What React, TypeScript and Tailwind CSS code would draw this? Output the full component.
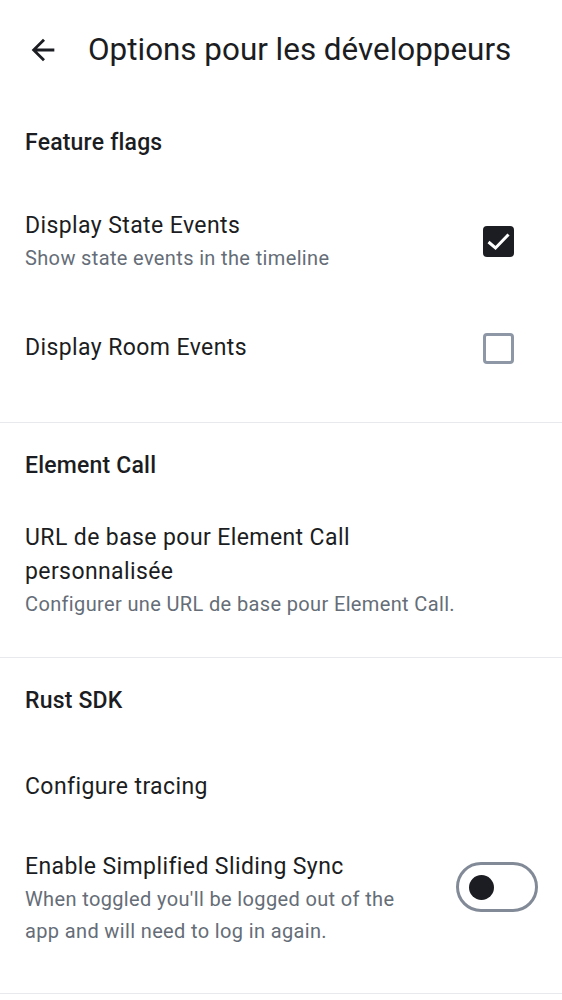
import React from "react";

const font = { fontFamily: "Roboto, 'Noto Sans', sans-serif" };

const SectionHeader: React.FC<{ title: string }> = ({ title }) => (
    <div className="px-[25px] pt-[27px] pb-[23px]">
        <h2 className="text-[23px] leading-[32px] font-medium tracking-[0.2px] text-[#1b1d22]">{title}</h2>
    </div>
);

const Divider: React.FC = () => <div className="h-px bg-[#e7e9ec]" />;

const Checkbox: React.FC<{ checked?: boolean }> = ({ checked }) =>
    checked ? (
        <div className="w-[31px] h-[31px] rounded-[4px] bg-[#1b1d22]">
            <svg width="31" height="31" viewBox="0 0 31 31" fill="none">
                <path d="M5.5 16l7 6L25.5 8.5" stroke="white" strokeWidth="3" />
            </svg>
        </div>
    ) : (
        <div className="w-[31px] h-[31px] rounded-[4px] border-[3px] border-[#8d97a5] bg-white" />
    );

const Toggle: React.FC = () => (
    <div className="mt-[12px] w-[82px] h-[50px] rounded-full border-[3px] border-[#818a96] flex items-center pl-[10px]">
        <div className="w-[25px] h-[25px] rounded-full bg-[#1b1d22]" />
    </div>
);

const App: React.FC = () => {
    return (
        <div className="w-[562px] min-h-[1000px] bg-white text-[#1b1d22]" style={font}>
            {/* top bar */}
            <div className="h-[100px] flex items-center">
                <button className="w-[88px] h-full flex items-center pl-[26px]">
                    <svg width="34" height="34" viewBox="0 0 24 24" fill="#1b1d22">
                        <path d="M20 11H7.83l5.59-5.59L12 4l-8 8 8 8 1.41-1.41L7.83 13H20v-2z" />
                    </svg>
                </button>
                <h1 className="text-[31.4px] leading-[40px] text-[#1b1d22]">Options pour les développeurs</h1>
            </div>

            {/* Feature flags */}
            <SectionHeader title="Feature flags" />
            <div className="flex items-center pl-[25px] pr-[48px] pt-[27px] pb-[29px]">
                <div className="flex-1">
                    <div className="text-[23px] leading-[33px] tracking-[0.4px]">Display State Events</div>
                    <div className="text-[20px] leading-[32px] tracking-[0.36px] text-[#656d77]">
                        Show state events in the timeline
                    </div>
                </div>
                <Checkbox checked />
            </div>
            <div className="flex items-center pl-[25px] pr-[48px] pt-[28px] pb-[30px]">
                <div className="flex-1 text-[23px] leading-[34px] tracking-[0.4px]">Display Room Events</div>
                <Checkbox />
            </div>
            <div className="h-[27px]" />
            <Divider />

            {/* Element Call */}
            <SectionHeader title="Element Call" />
            <div className="pl-[25px] pr-[48px] pt-[16px] pb-[37px]">
                <div className="text-[23px] leading-[34px] tracking-[0.4px] w-[400px]">
                    URL de base pour Element Call personnalisée
                </div>
                <div className="text-[20px] leading-[31px] tracking-[0.36px] text-[#656d77]">
                    Configurer une URL de base pour Element Call.
                </div>
            </div>
            <Divider />

            {/* Rust SDK */}
            <SectionHeader title="Rust SDK" />
            <div className="pl-[25px] pt-[30px] pb-[23px]">
                <div className="text-[23px] leading-[34px] tracking-[0.4px]">Configure tracing</div>
            </div>
            <div className="flex items-start pl-[25px] pr-[24px] pt-[23px] pb-[46px]">
                <div className="flex-1 pr-[24px]">
                    <div className="text-[23px] leading-[33px] tracking-[0.4px]">Enable Simplified Sliding Sync</div>
                    <div className="text-[20px] leading-[32px] tracking-[0.36px] text-[#656d77]">
                        When toggled you'll be logged out of the app and will need to log in again.
                    </div>
                </div>
                <Toggle />
            </div>
            <Divider />
        </div>
    );
};

export default App;
